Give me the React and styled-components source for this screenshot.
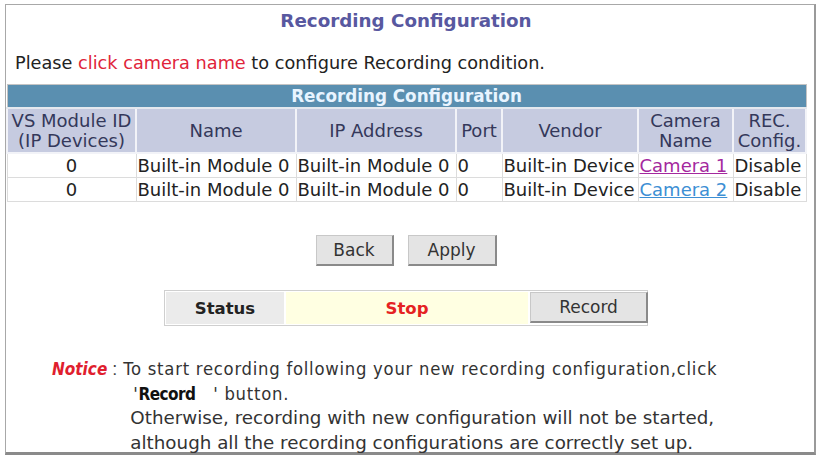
import React from "react";
import styled, { createGlobalStyle } from "styled-components";

const Global = createGlobalStyle`
  html, body { margin: 0; padding: 0; background: #fff; }
  body { font-family: "DejaVu Sans", Verdana, sans-serif; color: #222; }
`;

const Frame = styled.div`
  box-sizing: border-box;
  margin: 4px 0 0 5px;
  width: 811px;
  height: 451px;
  border: 1px solid #a8a8a8;
  border-bottom: 3px solid #8a8a8a;
  border-right: 2px solid #9a9a9a;
  display: flex;
  flex-direction: column;
`;

const Content = styled.div`
  width: 800px;
  display: flex;
  flex-direction: column;
`;

const PageTitle = styled.div`
  text-align: center;
  font-weight: bold;
  font-size: 18.3px;
  line-height: 22px;
  color: #5858a0;
  padding-top: 5px;
`;

const Intro = styled.div`
  font-size: 17.7px;
  line-height: 22px;
  margin: 20px 0 0 9px;
  color: #222;
`;

const Red = styled.span`
  color: #e0243a;
`;

const Table = styled.table`
  margin-top: 10px;
  border-collapse: collapse;
  width: 799px;
  table-layout: fixed;
  border: 1px solid #c4c4c4;
`;

const Caption = styled.th`
  background: #5a8fb0;
  color: #e8f4ff;
  font-size: 16.8px;
  font-weight: bold;
  height: 22px;
  padding: 0;
  line-height: 22px;
  border-bottom: 2px solid #e4e8ee;
`;

const Th = styled.th`
  background: #c6cbe0;
  color: #34385a;
  font-weight: normal;
  font-size: 18px;
  line-height: 19.5px;
  padding: 2px 0;
  border: 2px solid #f2f3f8;
  border-top: none;
  text-align: center;
  white-space: nowrap;
`;

const Td = styled.td`
  font-size: 18px;
  line-height: 21px;
  padding: 1px 1px;
  border: 1px solid #dcdcdc;
  text-align: ${(p) => p.$align || "left"};
  white-space: nowrap;
  overflow: hidden;
  color: #222;
`;

const CamLink = styled.a`
  color: ${(p) => (p.$visited ? "#a4289e" : "#3d8fd4")};
  text-decoration: underline;
  cursor: pointer;
`;

const ButtonRow = styled.div`
  display: flex;
  justify-content: center;
  gap: 14px;
  margin-top: 33px;
`;

const Btn = styled.button`
  font-family: "DejaVu Sans", Verdana, sans-serif;
  font-size: 17px;
  color: #333;
  background: #e4e4e4;
  width: ${(p) => p.$w}px;
  height: 31px;
  border: 1px solid #c8c8c8;
  border-right: 2px solid #8a8a8a;
  border-bottom: 2px solid #8a8a8a;
  padding: 0;
`;

const StatusBar = styled.div`
  margin: 24px auto 0;
  width: 484px;
  height: 36px;
  box-sizing: border-box;
  border: 1px solid #cfcfcf;
  display: grid;
  grid-template-columns: 118px 242px 1fr;
  gap: 2px;
  padding: 1px;
`;

const StatusLabel = styled.div`
  background: #ebebeb;
  font-weight: bold;
  font-size: 16.5px;
  color: #222;
  display: flex;
  align-items: center;
  justify-content: center;
`;

const StatusValue = styled.div`
  background: #ffffe2;
  color: #e52222;
  font-weight: bold;
  font-size: 16.5px;
  display: flex;
  align-items: center;
  justify-content: center;
`;

const Notice = styled.div`
  margin: 31px 0 0 46px;
  display: grid;
  grid-template-columns: auto 1fr;
  column-gap: 6px;
`;

const NoticeLabel = styled.div`
  font-family: "Liberation Sans", Arial, sans-serif;
  font-size: 18px;
  line-height: 24.5px;
  height: 24.5px;
  color: #444;
  white-space: nowrap;
`;

const NoticeWord = styled.span`
  color: #e01e2e;
  font-weight: bold;
  font-style: italic;
  font-family: "DejaVu Sans Condensed", "DejaVu Sans", sans-serif;
  font-stretch: condensed;
  font-size: 17px;
`;

const NoticeBody = styled.div`
  display: flex;
  flex-direction: column;
`;

const NarrowLine = styled.div`
  font-family: "DejaVu Sans Condensed", "DejaVu Sans", sans-serif;
  font-stretch: condensed;
  font-size: 18.3px;
  letter-spacing: 0.75px;
  line-height: 24.5px;
  height: 24.5px;
  color: #333;
  white-space: pre;
  padding-left: ${(p) => p.$indent || 0}px;
`;

const Line = styled.div`
  font-family: "DejaVu Sans", Verdana, sans-serif;
  font-size: 18.3px;
  line-height: 24.5px;
  height: 24.5px;
  color: #333;
  padding-left: ${(p) => p.$indent || 0}px;
  white-space: pre;
`;

const Bold = styled.b`
  color: #111;
  font-size: 17px;
  letter-spacing: -0.6px;
`;

const cols = [129, 160, 160, 46, 136, 95, 73];

const rows = [
  { id: "0", name: "Built-in Module 0", ip: "Built-in Module 0", port: "0", vendor: "Built-in Device", cam: "Camera 1", visited: true, rec: "Disable" },
  { id: "0", name: "Built-in Module 0", ip: "Built-in Module 0", port: "0", vendor: "Built-in Device", cam: "Camera 2", visited: false, rec: "Disable" },
];

export default function App() {
  return (
    <>
      <Global />
      <Frame>
        <Content>
          <PageTitle>Recording Configuration</PageTitle>
          <Intro>
            Please <Red>click camera name</Red> to configure Recording condition.
          </Intro>
          <Table>
            <colgroup>
              {cols.map((w, i) => (
                <col key={i} style={{ width: w }} />
              ))}
            </colgroup>
            <thead>
              <tr>
                <Caption colSpan={7}>Recording Configuration</Caption>
              </tr>
              <tr>
                <Th>VS Module ID<br />(IP Devices)</Th>
                <Th>Name</Th>
                <Th>IP Address</Th>
                <Th>Port</Th>
                <Th>Vendor</Th>
                <Th>Camera<br />Name</Th>
                <Th>REC.<br />Config.</Th>
              </tr>
            </thead>
            <tbody>
              {rows.map((r, i) => (
                <tr key={i}>
                  <Td $align="center">{r.id}</Td>
                  <Td>{r.name}</Td>
                  <Td>{r.ip}</Td>
                  <Td>{r.port}</Td>
                  <Td>{r.vendor}</Td>
                  <Td>
                    <CamLink $visited={r.visited}>{r.cam}</CamLink>
                  </Td>
                  <Td>{r.rec}</Td>
                </tr>
              ))}
            </tbody>
          </Table>
          <ButtonRow>
            <Btn $w={78}>Back</Btn>
            <Btn $w={89}>Apply</Btn>
          </ButtonRow>
          <StatusBar>
            <StatusLabel>Status</StatusLabel>
            <StatusValue>Stop</StatusValue>
            <Btn $w={118}>Record</Btn>
          </StatusBar>
          <Notice>
            <NoticeLabel>
              <NoticeWord>Notice</NoticeWord> :
            </NoticeLabel>
            <NoticeBody>
              <NarrowLine>To start recording following your new recording configuration,click</NarrowLine>
              <NarrowLine $indent={10}>'<Bold>Record</Bold>   ' button.</NarrowLine>
              <Line $indent={7}>Otherwise, recording with new configuration will not be started,</Line>
              <Line $indent={7}>although all the recording configurations are correctly set up.</Line>
            </NoticeBody>
          </Notice>
        </Content>
      </Frame>
    </>
  );
}
